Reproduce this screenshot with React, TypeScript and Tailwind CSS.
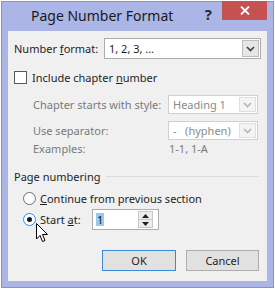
import React from "react";

function Chevron({ disabled }: { disabled?: boolean }) {
  return (
    <svg width="9" height="6" viewBox="0 0 9 6">
      <path d="M1 1 L4.5 4.5 L8 1" fill="none" stroke={disabled ? "#b5b5b5" : "#404040"} strokeWidth="1.6" />
    </svg>
  );
}

function Select({ value, disabled, className }: { value: string; disabled?: boolean; className: string }) {
  return (
    <div
      className={`relative flex items-center whitespace-pre border bg-white ${disabled ? "border-[#d0d0d0] text-[#8a8a8a]" : "border-[#acacac] text-[#1e1e1e]"} ${className}`}
    >
      <span className="pl-[4px]">{value}</span>
      <div
        className={`ml-auto mr-px flex h-[calc(100%-2px)] w-[17px] items-center justify-center border ${disabled ? "border-[#e0e0e0] bg-[#f4f4f4]" : "border-[#bdbdbd] bg-[#e6e6e6]"}`}
      >
        <Chevron disabled={disabled} />
      </div>
    </div>
  );
}

function Radio({ checked }: { checked?: boolean }) {
  return (
    <div
      className={`flex h-[13px] w-[13px] shrink-0 items-center justify-center rounded-full border bg-white ${checked ? "border-[#3c8ad8]" : "border-[#6e6e6e]"}`}
    >
      {checked && <div className="h-[5px] w-[5px] rounded-full bg-[#1a1a1a]" />}
    </div>
  );
}

export default function App() {
  return (
    <div
      className="relative h-[289px] w-[275px] whitespace-nowrap bg-white text-[11px] leading-none text-[#1e1e1e]"
      style={{ fontFamily: '"Noto Sans", "Open Sans", sans-serif' }}
    >
      <div className="ml-px mt-px flex h-[287px] w-[273px] flex-col border border-[#8592cf] bg-[#abb6e7] px-[6px] pb-[6px]">
        {/* TITLE BAR */}
        <div className="flex h-[29px] shrink-0 items-start">
          <div className="pl-[23px] pt-[7px] text-[14px] text-[#1a1a1a]">Page Number Format</div>
          <div className="ml-auto pr-[10px] pt-[5px] text-[15px] font-bold text-[#2b2b2b]">?</div>
          <div className="-mt-px flex h-[19px] w-[45px] items-center justify-center bg-[#c75050]">
            <svg width="10" height="9" viewBox="0 0 10 9">
              <path d="M1 0.5 L9 8.5 M9 0.5 L1 8.5" stroke="#fff" strokeWidth="1.8" />
            </svg>
          </div>
        </div>

        {/* BODY */}
        <div className="flex flex-1 flex-col bg-[#f0f0f0] pl-[6px] pr-[6px]">
          <div className="mt-[7px] flex h-[21px] items-center">
            <span className="w-[90px]">
              Number <u>f</u>ormat:
            </span>
            <Select value="1, 2, 3, …" className="h-[21px] flex-1" />
          </div>

          <div className="mt-[12px] flex h-[13px] items-center gap-[5px]">
            <div className="h-[13px] w-[13px] border border-[#5a5a5a] bg-white" />
            <span>
              Include chapter <u>n</u>umber
            </span>
          </div>

          <div className="mt-[11px] flex h-[19px] items-center pl-[19px] text-[#7a7a7a]">
            <span className="w-[135px]">Chapter starts with style:</span>
            <Select value="Heading 1" disabled className="h-[19px] w-[90px]" />
          </div>

          <div className="mt-[7px] flex h-[19px] items-center pl-[19px] text-[#7a7a7a]">
            <span className="w-[135px]">Use separator:</span>
            <Select value="-   (hyphen)" disabled className="h-[19px] w-[90px]" />
          </div>

          <div className="flex h-[16px] items-center pl-[19px] text-[#7a7a7a]">
            <span className="w-[135px]">Examples:</span>
            <span className="pl-px">1-1, 1-A</span>
          </div>

          <div className="mt-[12px] flex h-[16px] items-center gap-[6px] pr-[2px]">
            <span>Page numbering</span>
            <div className="h-px flex-1 bg-[#dcdcdc]" />
          </div>

          <div className="mt-[6px] flex h-[16px] items-center gap-[4px] pl-[9px]">
            <Radio />
            <span>
              <u>C</u>ontinue from previous section
            </span>
          </div>

          <div className="mt-[3px] flex h-[21px] items-center pl-[9px]">
            <Radio checked />
            <span className="ml-[4px] w-[52px]">
              Start <u>a</u>t:
            </span>
            <div className="flex h-[21px] w-[67px] items-center border border-[#acacac] bg-white">
              <span className="ml-[3px] bg-[#99c9ef] px-px py-px text-[#111]">1</span>
              <div className="ml-auto mr-[5px] flex h-[17px] w-[15px] flex-col border border-[#c8c8c8]">
                <div className="flex flex-1 items-center justify-center border-b border-[#c8c8c8] bg-[#ececec]">
                  <svg width="7" height="4" viewBox="0 0 7 4"><path d="M0 4 L3.5 0 L7 4 Z" fill="#202020" /></svg>
                </div>
                <div className="flex flex-1 items-center justify-center bg-[#ececec]">
                  <svg width="7" height="4" viewBox="0 0 7 4"><path d="M0 0 L3.5 4 L7 0 Z" fill="#202020" /></svg>
                </div>
              </div>
            </div>
          </div>

          <div className="mt-[20px] flex h-[21px] justify-end gap-[10px] pr-[2px]">
            <button className="flex w-[74px] items-center justify-center border border-[#3c8ad8] bg-[#e1e1e1]">OK</button>
            <button className="flex w-[73px] items-center justify-center border border-[#adadad] bg-[#e1e1e1]">Cancel</button>
          </div>
        </div>
      </div>

      {/* MOUSE CURSOR */}
      <svg className="absolute left-[36px] top-[222px]" width="13" height="21" viewBox="0 0 13 21">
        <path d="M0.5 0.5 L0.5 16 L4 12.5 L6.5 18.5 L9 17.5 L6.5 11.5 L11.5 11.5 Z" fill="#fff" stroke="#000" strokeWidth="1" strokeLinejoin="round" />
      </svg>
    </div>
  );
}
